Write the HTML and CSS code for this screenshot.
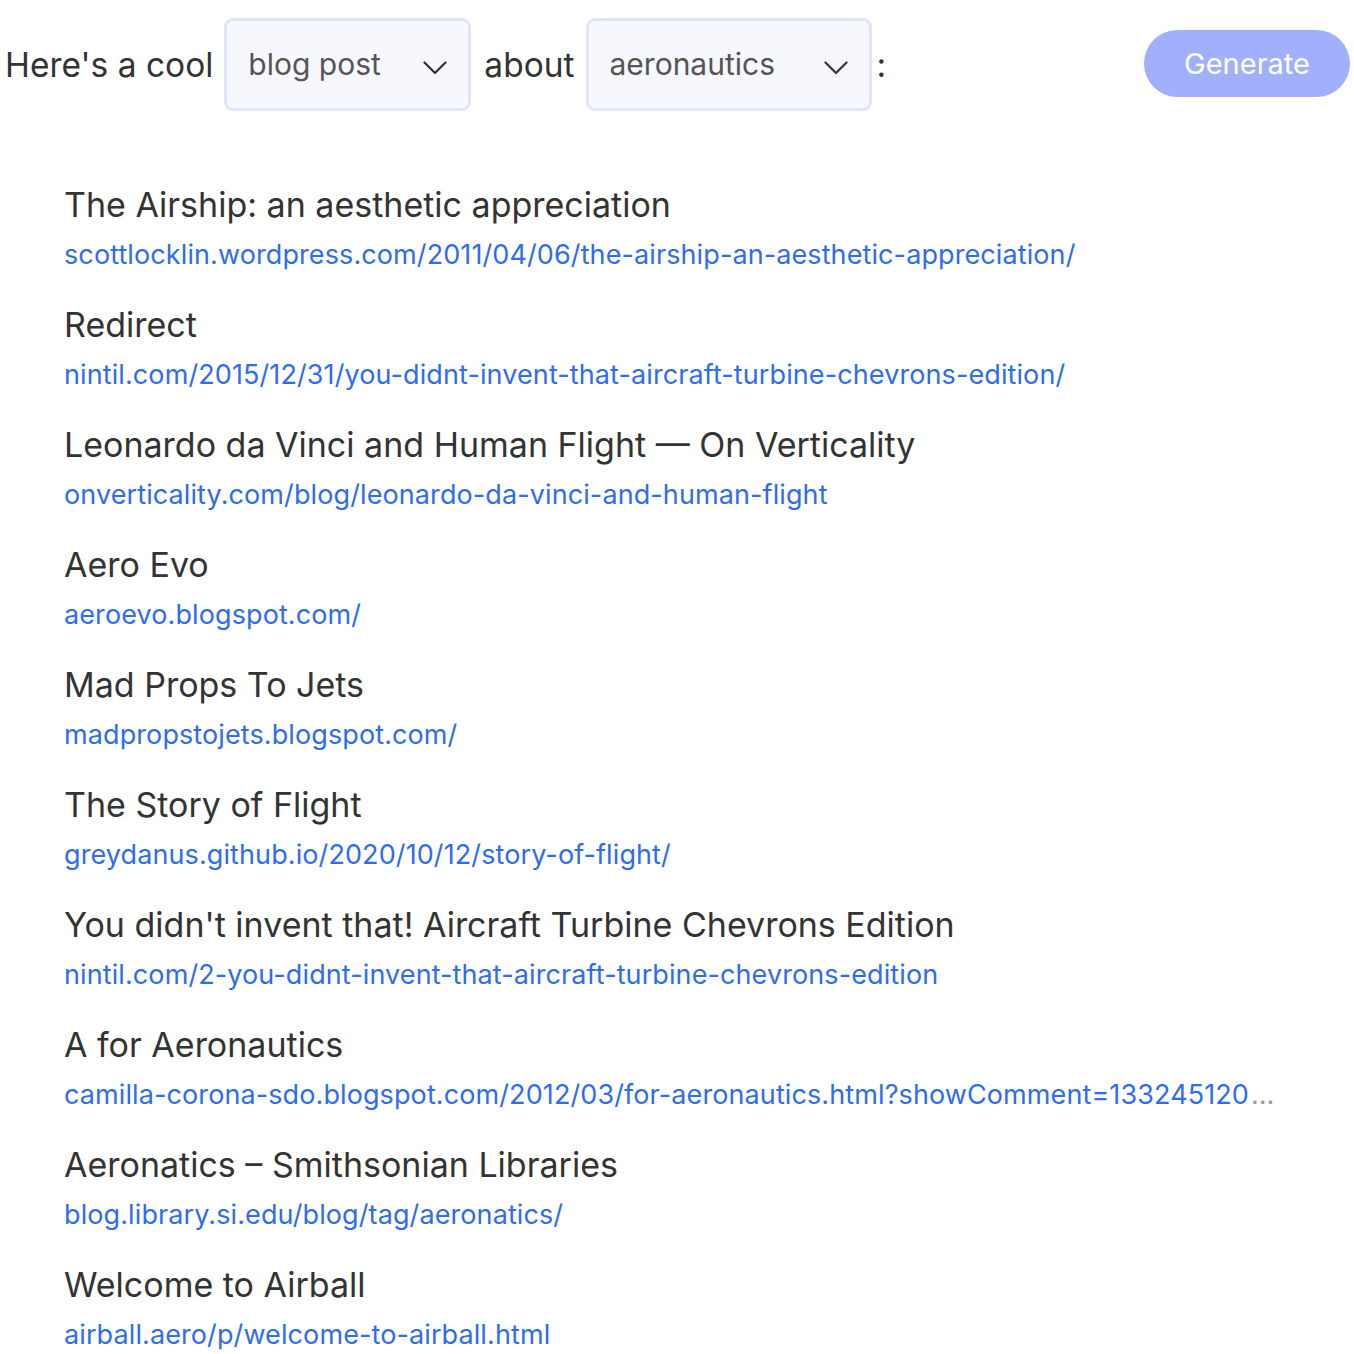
FILE: index.html
```html
<!DOCTYPE html>
<html>
<head>
<meta charset="utf-8">
<link rel="stylesheet" href="styles.css">
</head>
<body>
<div class="toolbar">
  <span class="label">Here's a cool</span>
  <div class="select sel-kind"><span>blog post</span><svg class="chev" viewBox="0 0 24 14" width="24" height="14"><path d="M1.5 1.5 L12 12 L22.5 1.5" fill="none" stroke="#333" stroke-width="2.2" stroke-linecap="round" stroke-linejoin="round"/></svg></div>
  <span class="label about">about</span>
  <div class="select sel-topic"><span>aeronautics</span><svg class="chev" viewBox="0 0 24 14" width="24" height="14"><path d="M1.5 1.5 L12 12 L22.5 1.5" fill="none" stroke="#333" stroke-width="2.2" stroke-linecap="round" stroke-linejoin="round"/></svg></div>
  <span class="label colon">:</span>
  <div class="spacer"></div>
  <button class="generate">Generate</button>
</div>
<ul class="results">
  <li><div class="title">The Airship: an aesthetic appreciation</div><div class="url"><a>scottlocklin.wordpress.com/2011/04/06/the-airship-an-aesthetic-appreciation/</a></div></li>
  <li><div class="title">Redirect</div><div class="url"><a>nintil.com/2015/12/31/you-didnt-invent-that-aircraft-turbine-chevrons-edition/</a></div></li>
  <li><div class="title">Leonardo da Vinci and Human Flight — On Verticality</div><div class="url"><a>onverticality.com/blog/leonardo-da-vinci-and-human-flight</a></div></li>
  <li><div class="title">Aero Evo</div><div class="url"><a>aeroevo.blogspot.com/</a></div></li>
  <li><div class="title">Mad Props To Jets</div><div class="url"><a>madpropstojets.blogspot.com/</a></div></li>
  <li><div class="title">The Story of Flight</div><div class="url"><a>greydanus.github.io/2020/10/12/story-of-flight/</a></div></li>
  <li><div class="title">You didn't invent that! Aircraft Turbine Chevrons Edition</div><div class="url"><a>nintil.com/2-you-didnt-invent-that-aircraft-turbine-chevrons-edition</a></div></li>
  <li><div class="title">A for Aeronautics</div><div class="url"><a>camilla-corona-sdo.blogspot.com/2012/03/for-aeronautics.html?showComment=133245120</a><span class="ellipsis">…</span></div></li>
  <li><div class="title">Aeronatics – Smithsonian Libraries</div><div class="url"><a>blog.library.si.edu/blog/tag/aeronatics/</a></div></li>
  <li><div class="title">Welcome to Airball</div><div class="url"><a>airball.aero/p/welcome-to-airball.html</a></div></li>
</ul>
</body>
</html>
```
FILE: styles.css
```css
* { box-sizing: border-box; }
html, body { margin: 0; padding: 0; background: #fff; }
body {
  font-family: Inter, "Liberation Sans", sans-serif;
  color: #333;
}
.toolbar {
  display: flex;
  align-items: center;
  padding: 18px 4px 0 5px;
  gap: 11px;
}
.label {
  font-size: 33.5px;
  color: #333;
}
.about { margin-left: 2px; }
.colon { margin-left: -6px; }
.select {
  display: flex;
  align-items: center;
  justify-content: space-between;
  height: 93px;
  border: 3px solid #e1e5f6;
  border-radius: 9px;
  background: #f7f8fe;
  padding: 0 21px 0 21px;
  font-size: 30px;
  color: #555;
}
.select span { position: relative; top: -1px; }
.sel-kind { width: 247px; }
.sel-topic { width: 286px; }
.chev { margin-top: 6px; }
.spacer { flex: 1; }
.generate {
  font-family: Inter, "Liberation Sans", sans-serif;
  width: 206px;
  height: 67px;
  border: none;
  border-radius: 34px;
  background: #a1b0fd;
  color: #fff;
  font-size: 29px;
  margin-top: -2px;
}
.results {
  list-style: none;
  margin: 74px 0 0 0;
  padding: 0 60px 0 64px;
}
.results li {
  height: 120px;
}
.title {
  font-size: 34px;
  line-height: 40px;
  color: #333;
}
.url {
  margin-top: 13px;
  font-size: 27px;
  line-height: 34px;
  letter-spacing: 0.1px;
  color: #888;
  white-space: nowrap;
}
.url a { color: #2f6cf0; }
.ellipsis { color: #999; margin-left: 2px; }
```
